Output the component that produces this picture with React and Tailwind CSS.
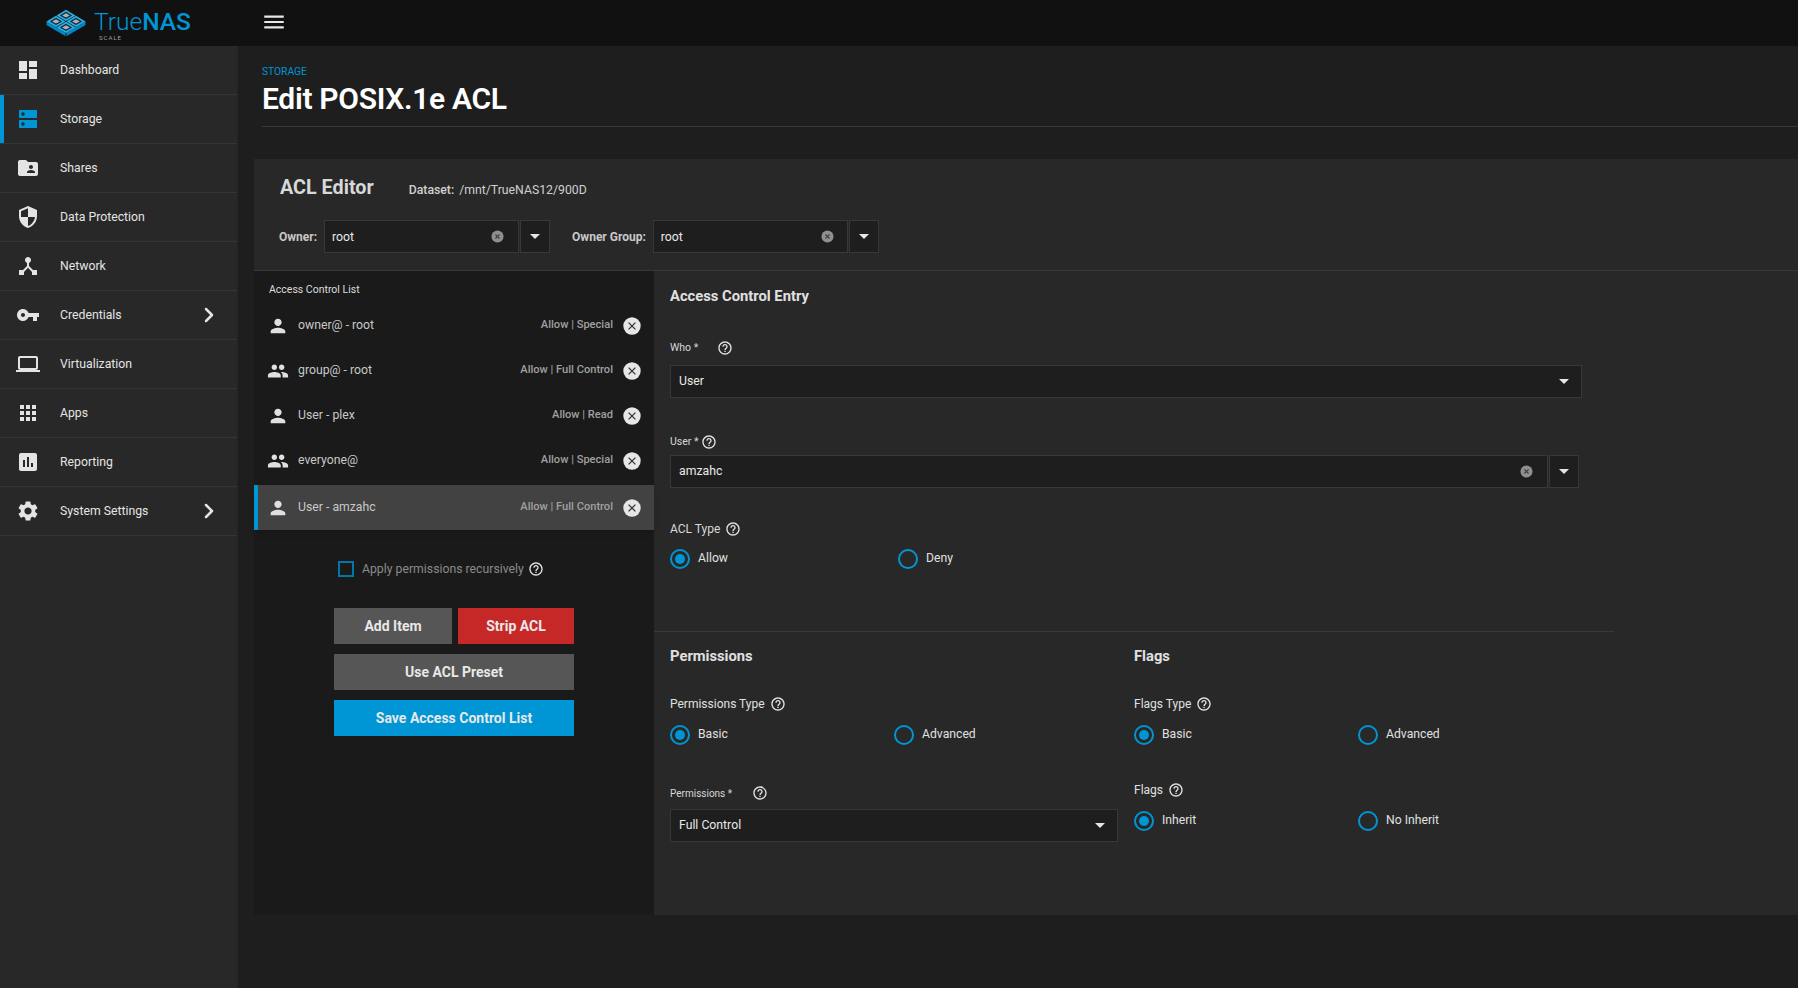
import { ChevronRight } from 'lucide-react';

const blue = 'text-[#0095d5]';

function MdIcon({ d, size = 24, className = '' }) {
    return (
        <svg viewBox="0 0 24 24" width={size} height={size} fill="currentColor" className={`shrink-0 ${className}`}>
            <path d={d} />
        </svg>
    );
}

const paths = {
    dashboard: 'M3 13h8V3H3v10zm0 8h8v-6H3v6zm10 0h8V11h-8v10zm0-18v6h8V3h-8z',
    shares: 'M20 6h-8l-2-2H4c-1.1 0-2 .9-2 2v12c0 1.1.9 2 2 2h16c1.1 0 2-.9 2-2V8c0-1.1-.9-2-2-2zm-5 3c1.1 0 2 .9 2 2s-.9 2-2 2-2-.9-2-2 .9-2 2-2zm4 8h-8v-1c0-1.33 2.67-2 4-2s4 .67 4 2v1z',
    security: 'M12 1L3 5v6c0 5.55 3.84 10.74 9 12 5.16-1.26 9-6.45 9-12V5l-9-4zm0 10.99h7c-.53 4.12-3.28 7.79-7 8.94V12H5V6.3l7-3.11v8.8z',
    network: 'M17 16l-4-4V8.82C14.16 8.4 15 7.3 15 6c0-1.66-1.34-3-3-3S9 4.34 9 6c0 1.3.84 2.4 2 2.82V12l-4 4H3v5h5v-3.05l4-4.2 4 4.2V21h5v-5h-4z',
    key: 'M12.65 10C11.83 7.67 9.61 6 7 6c-3.31 0-6 2.69-6 6s2.69 6 6 6c2.61 0 4.83-1.67 5.65-4H17v4h4v-4h2v-4H12.65zM7 14c-1.1 0-2-.9-2-2s.9-2 2-2 2 .9 2 2-.9 2-2 2z',
    laptop: 'M20 18c1.1 0 1.99-.9 1.99-2L22 6c0-1.1-.9-2-2-2H4c-1.1 0-2 .9-2 2v10c0 1.1.9 2 2 2H0v2h24v-2h-4zM4 6h16v10H4V6z',
    apps: 'M4 8h4V4H4v4zm6 12h4v-4h-4v4zm-6 0h4v-4H4v4zm0-6h4v-4H4v4zm6 0h4v-4h-4v4zm6-10v4h4V4h-4zm-6 4h4V4h-4v4zm6 6h4v-4h-4v4zm0 6h4v-4h-4v4z',
    chart: 'M19 3H5c-1.1 0-2 .9-2 2v14c0 1.1.9 2 2 2h14c1.1 0 2-.9 2-2V5c0-1.1-.9-2-2-2zM9 17H7v-7h2v7zm4 0h-2V7h2v10zm4 0h-2v-4h2v4z',
    gear: 'M19.14 12.94c.04-.3.06-.61.06-.94 0-.32-.02-.64-.07-.94l2.03-1.58a.49.49 0 0 0 .12-.61l-1.92-3.32a.488.488 0 0 0-.59-.22l-2.39.96c-.5-.38-1.03-.7-1.62-.94l-.36-2.54a.484.484 0 0 0-.48-.41h-3.84c-.24 0-.43.17-.47.41l-.36 2.54c-.59.24-1.13.57-1.62.94l-2.39-.96c-.22-.08-.47 0-.59.22L2.74 8.87c-.12.21-.08.47.12.61l2.03 1.58c-.05.3-.09.63-.09.94s.02.64.07.94l-2.03 1.58a.49.49 0 0 0-.12.61l1.92 3.32c.12.22.37.29.59.22l2.39-.96c.5.38 1.03.7 1.62.94l.36 2.54c.05.24.24.41.48.41h3.84c.24 0 .44-.17.47-.41l.36-2.54c.59-.24 1.13-.56 1.62-.94l2.39.96c.22.08.47 0 .59-.22l1.92-3.32c.12-.22.07-.47-.12-.61l-2.01-1.58zM12 15.6c-1.98 0-3.6-1.62-3.6-3.6s1.62-3.6 3.6-3.6 3.6 1.62 3.6 3.6-1.62 3.6-3.6 3.6z',
    person: 'M12 12c2.21 0 4-1.79 4-4s-1.79-4-4-4-4 1.79-4 4 1.79 4 4 4zm0 2c-2.67 0-8 1.34-8 4v2h16v-2c0-2.66-5.33-4-8-4z',
    group: 'M16 11c1.66 0 2.99-1.34 2.99-3S17.66 5 16 5c-1.66 0-3 1.34-3 3s1.34 3 3 3zm-8 0c1.66 0 2.99-1.34 2.99-3S9.66 5 8 5C6.34 5 5 6.34 5 8s1.34 3 3 3zm0 2c-2.33 0-7 1.17-7 3.5V19h14v-2.5c0-2.33-4.67-3.5-7-3.5zm8 0c-.29 0-.62.02-.97.05 1.16.84 1.97 1.97 1.97 3.45V19h6v-2.5c0-2.33-4.67-3.5-7-3.5z',
    help: 'M11 18h2v-2h-2v2zm1-16C6.48 2 2 6.48 2 12s4.48 10 10 10 10-4.48 10-10S17.52 2 12 2zm0 18c-4.41 0-8-3.59-8-8s3.59-8 8-8 8 3.59 8 8-3.59 8-8 8zm0-14c-2.21 0-4 1.79-4 4h2c0-1.1.9-2 2-2s2 .9 2 2c0 2-3 1.75-3 5h2c0-2.25 3-2.5 3-5 0-2.21-1.79-4-4-4z',
    menu: 'M3 18h18v-2H3v2zm0-5h18v-2H3v2zm0-7v2h18V6H3z',
};

const navItems = [
    { label: 'Dashboard', icon: 'dashboard' },
    { label: 'Storage', icon: 'storage', active: true },
    { label: 'Shares', icon: 'shares' },
    { label: 'Data Protection', icon: 'security' },
    { label: 'Network', icon: 'network' },
    { label: 'Credentials', icon: 'key', arrow: true },
    { label: 'Virtualization', icon: 'laptop' },
    { label: 'Apps', icon: 'apps' },
    { label: 'Reporting', icon: 'chart' },
    { label: 'System Settings', icon: 'gear', arrow: true },
];

const aclItems = [
    { name: 'owner@ - root', perm: 'Allow | Special', icon: 'person' },
    { name: 'group@ - root', perm: 'Allow | Full Control', icon: 'group' },
    { name: 'User - plex', perm: 'Allow | Read', icon: 'person' },
    { name: 'everyone@', perm: 'Allow | Special', icon: 'group' },
    { name: 'User - amzahc', perm: 'Allow | Full Control', icon: 'person', selected: true },
];

// one tile of the logo: bright frame, dark gap, grey centre
function LogoCell({ cx, cy }) {
    const d = (w, h) => `M${cx - w} ${cy} L${cx} ${cy - h} L${cx + w} ${cy} L${cx} ${cy + h} Z`;
    return (
        <g>
            <path d={d(9.5, 5.6)} fill="#2aaee6" />
            <path d={d(6.2, 3.6)} fill="#0d2a38" />
            <path d={d(3.9, 2.2)} fill="#b0b0b0" />
        </g>
    );
}

function Logo() {
    return (
        <svg viewBox="0 0 40 28" width="40" height="28" className="shrink-0">
            <path d="M0.5 12.5 L20 24 L39.5 12.5 L39.5 16 L20 27.5 L0.5 16 Z" fill="#0088c4" />
            <path d="M20 24 L20 27.5" stroke="#111111" strokeWidth="1" />
            <LogoCell cx={20} cy={6.4} />
            <LogoCell cx={10} cy={12.4} />
            <LogoCell cx={30} cy={12.4} />
            <LogoCell cx={20} cy={18.4} />
        </svg>
    );
}

function StorageIcon() {
    return (
        <svg viewBox="0 0 24 24" width="24" height="24" className="shrink-0">
            <rect x="3" y="3" width="18" height="8" fill="#0095d5" />
            <rect x="3" y="13" width="18" height="8" fill="#0095d5" />
            <circle cx="7" cy="7" r="1.8" fill="#1e2a33" />
            <circle cx="7" cy="17" r="1.8" fill="#1e2a33" />
        </svg>
    );
}

function CancelIcon() {
    return (
        <svg viewBox="0 0 18 18" width="18" height="18" className="ml-[10px] shrink-0">
            <circle cx="9" cy="9" r="8.7" fill="#e6e6e6" />
            <path d="M5.6 5.6 L12.4 12.4 M12.4 5.6 L5.6 12.4" stroke="#333333" strokeWidth="1.3" />
        </svg>
    );
}

function HelpIcon({ className = '' }) {
    return <MdIcon d={paths.help} size={16} className={`text-[#e4e4e4] ${className}`} />;
}

function Caret() {
    return <div className="h-0 w-0 border-x-[5px] border-t-[5px] border-x-transparent border-t-[#e6e6e6]" />;
}

function ClearIcon() {
    return (
        <svg viewBox="0 0 14 14" width="13" height="13" className="shrink-0">
            <circle cx="7" cy="7" r="6.5" fill="#8f8f8f" />
            <path d="M4.8 4.8 L9.2 9.2 M9.2 4.8 L4.8 9.2" stroke="#444" strokeWidth="1.4" />
        </svg>
    );
}

function Radio({ label, checked, className = '' }) {
    return (
        <div className={`flex items-center gap-2 ${className}`}>
            <div className="flex h-5 w-5 shrink-0 items-center justify-center rounded-full border-2 border-[#0095d5]">
                {checked && <div className="h-2.5 w-2.5 rounded-full bg-[#0095d5]" />}
            </div>
            <span className="-mt-0.5 text-[12.2px] text-[#e0e0e0]">{label}</span>
        </div>
    );
}

function RadioRow({ left, right, width }) {
    return (
        <div className="flex">
            <Radio label={left} checked className={width} />
            <Radio label={right} />
        </div>
    );
}

function SelectBox({ value, className = '' }) {
    return (
        <div className={`flex h-[33px] items-center justify-between border border-[#383838] bg-[#1e1e1e] pl-2 pr-[12px] text-[12.25px] text-[#e8e8e8] ${className}`}>
            <span>{value}</span>
            <Caret />
        </div>
    );
}

function ComboBox({ value, inputClass, btnClass, textClass = '', clearClass = 'mr-[13px]' }) {
    return (
        <div className="flex items-center gap-[1px]">
            <div className={`flex h-[33px] items-center justify-between border border-[#383838] bg-[#1e1e1e] text-[12.25px] text-[#e8e8e8] ${inputClass}`}>
                <span className={textClass}>{value}</span>
                <div className={clearClass}><ClearIcon /></div>
            </div>
            <div className={`flex h-[33px] items-center justify-center border border-[#383838] bg-[#1e1e1e] ${btnClass}`}>
                <Caret />
            </div>
        </div>
    );
}

function Sidebar() {
    return (
        <aside className="w-[238px] shrink-0 border-r border-[#252525] bg-[#282828]">
            {navItems.map(item => (
                <div key={item.label} className="relative flex h-[49px] items-center border-b border-[#363636] text-[12.25px] text-[#e4e4e4]">
                    {item.active && <div className="absolute left-0 top-0 h-full w-1 bg-[#0095d5]" />}
                    <div className="flex w-[60px] justify-center pr-[4px] text-[#e4e4e4]">
                        {item.icon === 'storage' ? <StorageIcon /> : <MdIcon d={paths[item.icon]} size={24} />}
                    </div>
                    <span className="flex-1">{item.label}</span>
                    {item.arrow && <ChevronRight size={24} strokeWidth={2.5} className="mr-[16px] text-[#e4e4e4]" />}
                </div>
            ))}
        </aside>
    );
}

function AclList() {
    return (
        <div className="flex w-[400px] shrink-0 flex-col bg-[#1a1a1a]">
            <div className="pl-[15px] pt-[12px] pb-[6px] text-[10.5px] leading-[14px] text-[#dcdcdc]">Access Control List</div>
            {aclItems.map(item => (
                <div
                    key={item.name}
                    className={`flex h-[45px] items-center pr-[13px] ${item.selected ? 'mt-[2px] border-l-4 border-[#0095d5] bg-[#424242] pl-[7px] shadow-md' : 'pl-[11px]'}`}
                >
                    <div className="flex w-[26px] shrink-0 justify-center">
                        <MdIcon d={paths[item.icon]} size={22} className="text-[#e0e0e0]" />
                    </div>
                    <span className="ml-[7px] flex-1 text-[12.25px] text-[#c8c8c8]">{item.name}</span>
                    <span className="text-[11.1px] font-medium text-[#a0a0a0]">{item.perm}</span>
                    <CancelIcon />
                </div>
            ))}
            <div className="mt-[30px] ml-[84px] flex h-[18px] items-center">
                <div className="h-[16px] w-[16px] border-2 border-[#0077a8]" />
                <span className="ml-2 text-[12.25px] text-[#8a8a8a]">Apply permissions recursively</span>
                <HelpIcon className="ml-[4px]" />
            </div>
            <div className="mt-[30px] ml-[80px] flex w-[240px] flex-col gap-[10px] text-[14px] font-bold text-[#e8e8e8]">
                <div className="flex gap-[6px]">
                    <div className="flex h-9 w-[118px] items-center justify-center bg-[#565656]">Add Item</div>
                    <div className="flex h-9 flex-1 items-center justify-center bg-[#c62828]">Strip ACL</div>
                </div>
                <div className="flex h-9 items-center justify-center bg-[#565656]">Use ACL Preset</div>
                <div className="flex h-9 items-center justify-center bg-[#0095d5]">Save Access Control List</div>
            </div>
        </div>
    );
}

function EntryForm() {
    return (
        <div className="flex-1 pb-[70px]">
            <div className="w-[960px] border-b border-[#383838] px-4 pb-[62px]">
                <h3 className="pt-[15px] text-[14.75px] font-bold leading-[20px] text-[#e0e0e0]">Access Control Entry</h3>
                <div className="mt-[34px] flex h-4 items-center text-[10.5px] text-[#d8d8d8]">
                    Who *
                    <HelpIcon className="ml-[19px]" />
                </div>
                <SelectBox value="User" className="mt-[9px] w-[912px]" />
                <div className="mt-[36px] flex h-4 items-center text-[10.5px] text-[#d8d8d8]">
                    User *
                    <HelpIcon className="ml-[3px]" />
                </div>
                <div className="mt-[5px]">
                    <ComboBox value="amzahc" inputClass="w-[878px] pl-2" btnClass="w-[30px]" clearClass="mr-[14px]" />
                </div>
                <div className="mt-[33px] flex h-4 items-center text-[12px] text-[#d8d8d8]">
                    ACL Type
                    <HelpIcon className="ml-[5px]" />
                </div>
                <div className="mt-[12px]">
                    <RadioRow left="Allow" right="Deny" width="w-[228px]" />
                </div>
            </div>
            <div className="flex px-4">
                <div className="w-[464px]">
                    <h3 className="pt-[14px] text-[14.75px] font-bold leading-[20px] text-[#e0e0e0]">Permissions</h3>
                    <div className="mt-[30px] flex h-4 items-center text-[12px] text-[#e0e0e0]">
                        Permissions Type
                        <HelpIcon className="ml-[5px]" />
                    </div>
                    <div className="mt-[13px]">
                        <RadioRow left="Basic" right="Advanced" width="w-[224px]" />
                    </div>
                    <div className="mt-[40px] flex h-4 items-center text-[10px] text-[#d8d8d8]">
                        Permissions *
                        <HelpIcon className="ml-[20px]" />
                    </div>
                    <SelectBox value="Full Control" className="mt-[8px] w-[448px]" />
                </div>
                <div className="flex-1">
                    <h3 className="pt-[14px] text-[14.75px] font-bold leading-[20px] text-[#e0e0e0]">Flags</h3>
                    <div className="mt-[30px] flex h-4 items-center text-[12px] text-[#e0e0e0]">
                        Flags Type
                        <HelpIcon className="ml-[5px]" />
                    </div>
                    <div className="mt-[13px]">
                        <RadioRow left="Basic" right="Advanced" width="w-[224px]" />
                    </div>
                    <div className="mt-[37px] flex h-4 items-center text-[12px] text-[#e0e0e0]">
                        Flags
                        <HelpIcon className="ml-[5px]" />
                    </div>
                    <div className="mt-[13px]">
                        <RadioRow left="Inherit" right="No Inherit" width="w-[224px]" />
                    </div>
                </div>
            </div>
        </div>
    );
}

export default function App() {
    return (
        <div className="flex h-[988px] flex-col overflow-hidden bg-[#1e1e1e] font-['Roboto',sans-serif]">
            {/* Top bar */}
            <header className="flex h-[46px] shrink-0 items-center bg-[#111111]">
                <div className="flex w-[238px] items-center pl-[46px]">
                    <Logo />
                    <div className="ml-2 mt-[3px] flex flex-col">
                        <div className="text-[24.5px] leading-[26px] text-[#0095d5]">
                            <span className="font-light">True</span><span className="font-medium">NAS</span>
                        </div>
                        <div className="ml-[5px] -mt-[1px] text-[6px] leading-[7px] tracking-[1px] text-[#a0a0a0]">SCALE</div>
                    </div>
                </div>
                <MdIcon d={paths.menu} size={26} className="ml-[23px] -mt-[2px] text-[#e8e8e8]" />
            </header>

            <div className="flex flex-1">
                <Sidebar />
                <main className="min-w-0 flex-1 pl-4">
                    <div className="ml-2 h-[81px] border-b border-[#383838] pt-[19px]">
                        <div className={`text-[10.25px] leading-[13px] ${blue}`}>STORAGE</div>
                        <h1 className="mt-[3px] text-[30px] font-semibold leading-[36px] tracking-[-0.3px] text-white">Edit POSIX.1e ACL</h1>
                    </div>
                    {/* ACL editor card */}
                    <div className="mt-8 bg-[#282828]">
                        <div className="h-[112px] border-b border-[#383838] pl-[26px]">
                            <div className="flex items-center pt-[17px]">
                                <h2 className="text-[19.75px] font-bold leading-[24px] text-[#d8d8d8]">ACL Editor</h2>
                                <div className="ml-[35px] mt-[4px] text-[12.25px] text-[#d0d0d0]">
                                    <span className="font-medium">Dataset:</span>
                                    <span className="ml-[5px]">/mnt/TrueNAS12/900D</span>
                                </div>
                            </div>
                            <div className="mt-[20px] flex items-center">
                                <span className="-ml-[1px] mr-[7px] text-[12px] font-bold text-[#c8c8c8]">Owner:</span>
                                <ComboBox value="root" inputClass="w-[195px] pl-[7px]" textClass="pt-[1px]" btnClass="w-[30px]" clearClass="mr-[14px]" />
                                <span className="ml-[22px] mr-[7px] text-[12px] font-bold text-[#c8c8c8]">Owner Group:</span>
                                <ComboBox value="root" inputClass="w-[195px] pl-[7px]" textClass="pt-[1px]" btnClass="w-[30px]" clearClass="mr-[13px]" />
                            </div>
                        </div>
                        <div className="flex h-[644px]">
                            <AclList />
                            <EntryForm />
                        </div>
                    </div>
                </main>
            </div>
        </div>
    );
}
